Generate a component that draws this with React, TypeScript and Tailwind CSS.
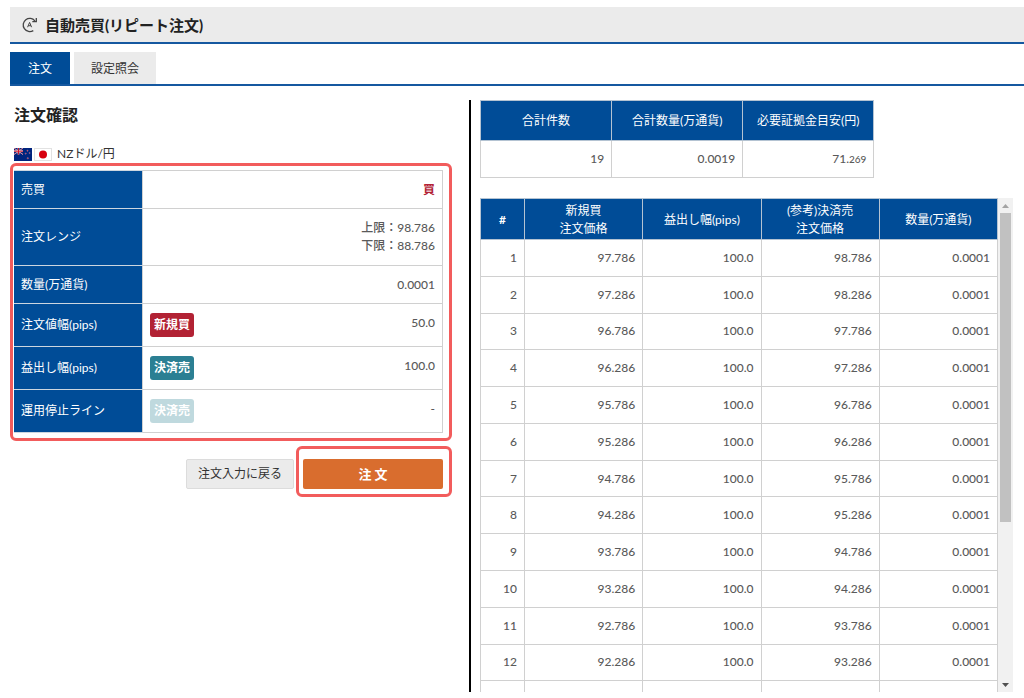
import React, { useRef, useState } from 'react';

const orders = Array.from({ length: 19 }, (_, i) => ({
  no: i + 1,
  open: (97.786 - i * 0.5).toFixed(3),
  width: '100.0',
  close: (98.786 - i * 0.5).toFixed(3),
  amount: '0.0001',
}));

const RepeatIcon = () => (
  <svg className="w-4 h-4" viewBox="0 0 16 16" fill="none" stroke="#444" strokeWidth="1.3" aria-hidden="true">
    <path d="M11.3 13.6A6.6 6.6 0 1 1 12.9 3.8" />
    <path d="M10.3 4.6h4V.9" />
    <path d="M5.6 10.2 7.6 5.4l2 4.8M6.3 8.7h2.6" strokeWidth="1" />
  </svg>
);

const NzFlag = () => (
  <svg className="w-[18px] h-[13px]" viewBox="0 0 18 13" aria-hidden="true">
    <rect width="18" height="13" fill="#00247d" />
    <path d="M0 0l9 6.5M9 0L0 6.5" stroke="#e9d5de" strokeWidth="1" />
    <path d="M0 0l9 6.5M9 0L0 6.5" stroke="#cc142b" strokeWidth="0.4" />
    <path d="M4.5 0v6.5M0 3.2h9" stroke="#f0dfe5" strokeWidth="1.7" />
    <path d="M4.5 0v6.5M0 3.2h9" stroke="#cc142b" strokeWidth="1" />
    <g fill="#cc142b" stroke="#d9c8dc" strokeWidth="0.3">
      <circle cx="13.5" cy="2.7" r="0.6" />
      <circle cx="11.7" cy="5.6" r="0.6" />
      <circle cx="15.6" cy="5" r="0.6" />
      <circle cx="13.8" cy="10.2" r="0.7" />
    </g>
  </svg>
);

const JpFlag = () => (
  <svg className="w-[18px] h-[13px]" viewBox="0 0 18 13" aria-hidden="true">
    <rect x="0.5" y="0.5" width="17" height="12" fill="#fff" stroke="#e2e2e2" />
    <circle cx="9" cy="6.5" r="4" fill="#d7000f" />
  </svg>
);

type RowProps = {
  label: string;
  className: string;
  badge?: React.ReactNode;
  children: React.ReactNode;
};

const ConfirmRow: React.FC<RowProps> = ({ label, className, badge, children }) => (
  <tr className={className}>
    <th scope="row" className="w-[30%] px-[7px] bg-[#004c97] border-y border-[#ccd6e0] text-left font-normal text-white">
      {label}
    </th>
    <td className="px-[7px] border border-[#d0d0d0] text-right">
      {badge ? (
        <div className="flex items-start justify-between">
          {badge}
          <span className="leading-5">{children}</span>
        </div>
      ) : (
        children
      )}
    </td>
  </tr>
);

const badgeBase = 'h-6 px-1 rounded-[3px] leading-6 font-bold text-white';
const headCell = 'bg-[#004c97] border border-[#b4c3d2] px-1 pt-px font-normal text-white';
const bodyCell = 'border border-[#d0d0d0] px-[7px] text-right';

const OrderList: React.FC = () => {
  const boxRef = useRef<HTMLDivElement>(null);
  const [bar, setBar] = useState({ top: 0, size: 66.5 });

  const handleScroll = () => {
    const el = boxRef.current;
    if (!el) return;
    setBar({
      top: (el.scrollTop / el.scrollHeight) * 100,
      size: (el.clientHeight / el.scrollHeight) * 100,
    });
  };

  const scrollStep = (step: number) => boxRef.current?.scrollBy({ top: step });

  return (
    <div className="flex flex-1 min-h-0">
      <div ref={boxRef} onScroll={handleScroll} className="flex-1 overflow-y-auto [scrollbar-width:none]">
        <table className="w-full h-[741px] table-fixed border-collapse">
          <thead>
            <tr className="h-[41px]">
              <th scope="col" className={`${headCell} w-11`}><span className="font-bold">#</span></th>
              <th scope="col" className={headCell}>新規買<br />注文価格</th>
              <th scope="col" className={headCell}>益出し幅(pips)</th>
              <th scope="col" className={headCell}>(参考)決済売<br />注文価格</th>
              <th scope="col" className={headCell}>数量(万通貨)</th>
            </tr>
          </thead>
          <tbody>
            {orders.map((o) => (
              <tr key={o.no}>
                <td className={bodyCell}>{o.no}</td>
                <td className={bodyCell}>{o.open}</td>
                <td className={bodyCell}>{o.width}</td>
                <td className={bodyCell}>{o.close}</td>
                <td className={bodyCell}>{o.amount}</td>
              </tr>
            ))}
          </tbody>
        </table>
      </div>

      <div className="flex flex-col w-[15px] bg-[#f1f1f1]">
        <button type="button" aria-label="上へ" onClick={() => scrollStep(-37)} className="flex items-center justify-center h-[15px]">
          <svg className="w-[7px] h-1" viewBox="0 0 7 4" fill="#a3a3a3"><path d="M0 4 3.5 0 7 4z" /></svg>
        </button>
        <div className="flex-1 px-[2px]">
          <div className="relative h-full">
            <div
              className="absolute inset-x-0 bg-[#c1c1c1]"
              style={{ top: `${bar.top}%`, height: `${bar.size}%` }}
            />
          </div>
        </div>
        <button type="button" aria-label="下へ" onClick={() => scrollStep(37)} className="flex items-center justify-center h-[15px]">
          <svg className="w-[7px] h-1" viewBox="0 0 7 4" fill="#505050"><path d="M0 0h7L3.5 4z" /></svg>
        </button>
      </div>
    </div>
  );
};

const App: React.FC = () => {
  return (
    <div className="flex flex-col h-screen pt-[7px] pb-[6px] pl-[10px] bg-white text-xs leading-[18px] text-[#5a5a5a] font-medium font-[Lato,'Noto_Sans_CJK_JP',sans-serif]">
      <header className="flex items-center gap-[7px] h-[37px] pl-3 bg-[#ebebeb] border-b-2 border-[#1558a0]">
        <RepeatIcon />
        <h1 className="text-[15px] font-bold text-[#222]">自動売買(リピート注文)</h1>
      </header>

      <nav className="flex gap-1 mt-2 border-b-2 border-[#1558a0] font-normal">
        <a href="#order" className="px-[18px] pt-px h-8 leading-8 bg-[#004c97] text-white">注文</a>
        <a href="#settings" className="px-[17px] pt-px h-8 leading-8 bg-[#ebebeb] text-[#333]">設定照会</a>
      </nav>

      <main className="grid flex-1 min-h-0 grid-cols-[461fr_553fr] mt-[14px]">
        <section className="pr-[17px] border-r-2 border-black">
          <h2 className="pl-1 mt-[3px] text-base leading-6 font-bold text-[#222]">注文確認</h2>
          <div className="flex items-center gap-[2px] pl-1 mt-[18px] font-normal">
            <NzFlag />
            <JpFlag />
            <span className="pl-[3px] text-[#333]">NZドル/円</span>
          </div>

          <div className="pt-1 pr-[6px] pb-[5px] pl-px border-[3px] border-[#f25c5c] rounded-md">
            <table className="w-full border-collapse">
              <tbody>
                <ConfirmRow label="売買" className="h-[38px]">
                  <span className="font-bold text-[#b22234]">買</span>
                </ConfirmRow>
                <ConfirmRow label="注文レンジ" className="h-[57px]">
                  上限：98.786<br />下限：88.786
                </ConfirmRow>
                <ConfirmRow label="数量(万通貨)" className="h-[38px]">0.0001</ConfirmRow>
                <ConfirmRow
                  label="注文値幅(pips)"
                  className="h-[43px]"
                  badge={<span className={`${badgeBase} bg-[#b22234]`}>新規買</span>}
                >
                  50.0
                </ConfirmRow>
                <ConfirmRow
                  label="益出し幅(pips)"
                  className="h-[43px]"
                  badge={<span className={`${badgeBase} bg-[#2b7f93]`}>決済売</span>}
                >
                  100.0
                </ConfirmRow>
                <ConfirmRow
                  label="運用停止ライン"
                  className="h-[43px]"
                  badge={<span className={`${badgeBase} bg-[#bfd9de]`}>決済売</span>}
                >
                  -
                </ConfirmRow>
              </tbody>
            </table>
          </div>

          <div className="flex items-end justify-end gap-[2px] mt-[5px]">
            <button type="button" className="h-[30px] px-[11px] mb-2 bg-[#ebebeb] border border-[#dcdcdc] rounded-[2px] font-normal text-[#333]">
              注文入力に戻る
            </button>
            <div className="pt-[10px] pr-[6px] pb-[5px] pl-1 border-[3px] border-[#f25c5c] rounded-md">
              <button type="button" className="block w-[140px] h-[30px] bg-[#d96d2e] rounded-[2px] text-[13px] font-bold text-white">
                注 文
              </button>
            </div>
          </div>
        </section>

        <section className="flex flex-col min-h-0 gap-5 pl-[9px] pr-[11px]">
          <table className="w-[74%] table-fixed border-collapse">
            <thead>
              <tr className="h-10">
                <th scope="col" className={headCell}>合計件数</th>
                <th scope="col" className={headCell}>合計数量(万通貨)</th>
                <th scope="col" className={headCell}>必要証拠金目安(円)</th>
              </tr>
            </thead>
            <tbody>
              <tr className="h-[37px]">
                <td className={bodyCell}>19</td>
                <td className={bodyCell}>0.0019</td>
                <td className={bodyCell}>71.<span className="text-[10px]">269</span></td>
              </tr>
            </tbody>
          </table>

          <OrderList />
        </section>
      </main>
    </div>
  );
};

export default App;
